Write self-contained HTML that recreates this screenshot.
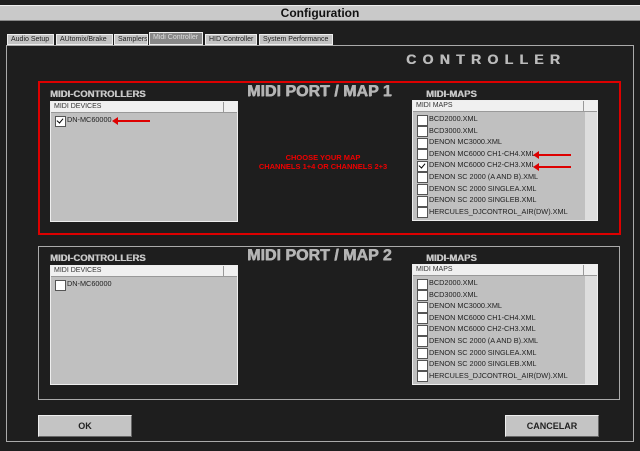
<!DOCTYPE html><html><head><style>
*{margin:0;padding:0;box-sizing:border-box}
body{width:640px;height:451px;background:#1e1e1e;font-family:"Liberation Sans",sans-serif;position:relative;overflow:hidden}
.a{position:absolute}
.title{left:0;top:5px;width:640px;height:16px;background:#c9c9c9;border-top:1px solid #eee;border-bottom:1px solid #888;text-align:center;font-weight:bold;font-size:12px;line-height:15px;color:#111}
.tab{position:absolute;top:34px;height:11px;background:#c4c4c4;border:1px solid #eee;font-size:7px;line-height:9px;color:#222;padding-left:3px;white-space:nowrap;overflow:hidden}
.panel{left:6px;top:45px;width:628px;height:397px;border:1px solid #aaa;background:#1e1e1e}
.box{border:2px solid #d00}
.box2{border:1px solid #aaa}
.lbl{font-weight:bold;font-size:9.5px;color:#c8c8c8;text-shadow:0.4px 0 0 #c8c8c8}
.big{font-weight:bold;font-size:16px;color:#b4b4b4;text-shadow:0.6px 0 0 #b4b4b4,0 0.4px 0 #b4b4b4}
.list{background:#c0c0c0;border:1px solid #eee;overflow:hidden}
.hdr{height:11px;background:#f0f0f0;border-bottom:1px solid #999;font-size:7px;line-height:10px;color:#333;padding-left:3px;position:relative}
.hdr:after{content:"";position:absolute;right:-1px;top:0;width:14px;height:11px;border-left:1px solid #999}
.rows{padding-top:1px}
.row{height:11.6px;font-size:7.3px;line-height:11.6px;color:#222;padding-left:16px;position:relative;white-space:nowrap}
.row:before{content:"";position:absolute;left:4px;top:1.5px;width:9px;height:9px;background:#fff;border:1px solid #555}
.row.c:after{content:"";position:absolute;left:7px;top:2.5px;width:3px;height:5px;border-right:1.5px solid #000;border-bottom:1.5px solid #000;transform:rotate(40deg)}
.sb{position:absolute;right:0;top:11px;width:12px;bottom:0;background:#ddd}
.btn{background:#c4c4c4;border:1px solid #eee;border-right-color:#666;border-bottom-color:#666;text-align:center;font-weight:bold;font-size:9px;line-height:20px;color:#222}
.arr{position:absolute;height:2px;background:#d00}
.arr:before{content:"";position:absolute;left:-5px;top:-3px;border-right:6px solid #d00;border-top:4px solid transparent;border-bottom:4px solid transparent}
</style></head><body>
<div class="a title">Configuration</div>
<div class="a panel"></div>
<div class="tab" style="left:7px;width:47px">Audio Setup</div>
<div class="tab" style="left:56px;width:57px">AUtomix/Brake</div>
<div class="tab" style="left:114px;width:34px">Samplers</div>
<div class="tab" style="left:149px;width:54px;background:#888;color:#ddd;top:32px;height:13px">Midi Controller</div>
<div class="tab" style="left:205px;width:52px">HID Controller</div>
<div class="tab" style="left:259px;width:74px">System Performance</div>
<div class="a" style="left:406px;top:51px;font-weight:bold;font-size:14px;letter-spacing:6.3px;color:#bbb;text-shadow:0.5px 0 0 #bbb">CONTROLLER</div>

<div class="a box" style="left:38px;top:81px;width:583px;height:154px"></div>
<div class="a lbl" style="left:50px;top:89px">MIDI-CONTROLLERS</div>
<div class="a big" style="left:247px;top:83px">MIDI PORT / MAP 1</div>
<div class="a lbl" style="left:426px;top:89px">MIDI-MAPS</div>
<div class="a list" style="left:50px;top:101px;width:188px;height:121px"><div class="hdr">MIDI DEVICES</div><div class="rows"><div class="row c">DN-MC60000</div></div></div>
<div class="arr" style="left:117px;top:120px;width:33px"></div>
<div class="a" style="left:248px;top:153px;width:150px;text-align:center;font-weight:bold;font-size:7.5px;line-height:9px;color:#e00">CHOOSE YOUR MAP<br>CHANNELS 1+4 OR CHANNELS 2+3</div>
<div class="a list" style="left:412px;top:100px;width:186px;height:121px"><div class="hdr">MIDI MAPS</div><div class="sb"></div><div class="rows">
<div class="row">BCD2000.XML</div><div class="row">BCD3000.XML</div><div class="row">DENON MC3000.XML</div><div class="row">DENON MC6000 CH1-CH4.XML</div><div class="row c">DENON MC6000 CH2-CH3.XML</div><div class="row">DENON SC 2000 (A AND B).XML</div><div class="row">DENON SC 2000 SINGLEA.XML</div><div class="row">DENON SC 2000 SINGLEB.XML</div><div class="row">HERCULES_DJCONTROL_AIR(DW).XML</div></div></div>
<div class="arr" style="left:538px;top:154px;width:33px"></div>
<div class="arr" style="left:538px;top:166px;width:33px"></div>

<div class="a box2" style="left:38px;top:246px;width:582px;height:154px"></div>
<div class="a lbl" style="left:50px;top:253px">MIDI-CONTROLLERS</div>
<div class="a big" style="left:247px;top:247px">MIDI PORT / MAP 2</div>
<div class="a lbl" style="left:426px;top:253px">MIDI-MAPS</div>
<div class="a list" style="left:50px;top:265px;width:188px;height:120px"><div class="hdr">MIDI DEVICES</div><div class="rows"><div class="row">DN-MC60000</div></div></div>
<div class="a list" style="left:412px;top:264px;width:186px;height:121px"><div class="hdr">MIDI MAPS</div><div class="sb"></div><div class="rows">
<div class="row">BCD2000.XML</div><div class="row">BCD3000.XML</div><div class="row">DENON MC3000.XML</div><div class="row">DENON MC6000 CH1-CH4.XML</div><div class="row">DENON MC6000 CH2-CH3.XML</div><div class="row">DENON SC 2000 (A AND B).XML</div><div class="row">DENON SC 2000 SINGLEA.XML</div><div class="row">DENON SC 2000 SINGLEB.XML</div><div class="row">HERCULES_DJCONTROL_AIR(DW).XML</div></div></div>

<div class="a btn" style="left:38px;top:415px;width:94px;height:22px">OK</div>
<div class="a btn" style="left:505px;top:415px;width:94px;height:22px">CANCELAR</div>
</body></html>
